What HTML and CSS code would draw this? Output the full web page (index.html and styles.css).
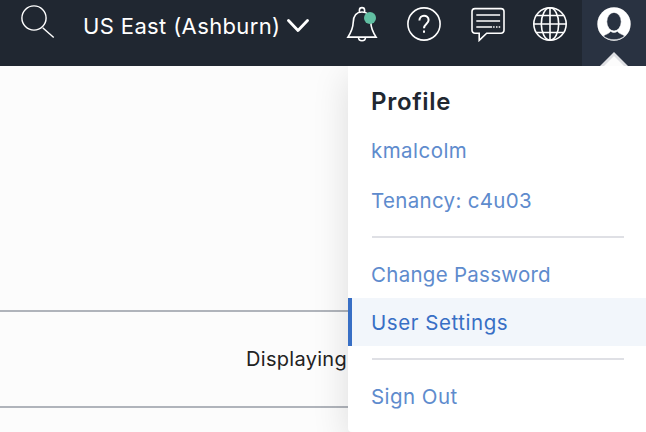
FILE: index.html
```html
<!DOCTYPE html>
<html lang="en">
<head>
<meta charset="utf-8">
<title>Console</title>
<link rel="stylesheet" href="styles.css">
</head>
<body>
<header class="topbar">
  <svg class="icon search" viewBox="0 0 36 36"><circle cx="14" cy="14" r="12.1"/><path d="M22.7 23.7 33.7 33.6"/></svg>
  <div class="region"><span class="region-name">US East (Ashburn)</span>
    <svg class="chevron" viewBox="0 0 22 14"><path d="m1.5 1.5 9.5 10 9.5-10"/></svg>
  </div>
  <svg class="icon bell" viewBox="0 0 36 36"><path d="M15.4 5.8V4.2a2.6 2.6 0 0 1 5.2 0v1.6M3.9 31.1C8.3 24.5 9 21.500 9.200 16.500 9.400 9.800 12.600 6 18 6s8.600 3.800 8.800 10.500c.2 5 .9 8 5.300 14.600zM14.500 31.300c0 4.600 7 4.600 7 0"/><circle class="badge" cx="26" cy="12" r="6"/></svg>
  <svg class="icon help" viewBox="0 0 36 36"><circle cx="18" cy="18" r="16.1"/><path class="question" d="M13.4 14.6c0-6.5 9.2-6.2 9.2-.6 0 4-4.6 4.1-4.6 8.3"/><path class="question" d="M18 24.6v2.2"/></svg>
  <svg class="icon chat" viewBox="0 0 36 36"><path d="M5 2.6h26a3 3 0 0 1 3 3v18.6a3 3 0 0 1-3 3H16.7l-7.5 7.2v-7.2H5a3 3 0 0 1-3-3V5.6a3 3 0 0 1 3-3zM6.3 9h23.8M6.3 15h23.8M6.3 21h15.8M23.1 21h1.5M26 21h1.5M28.7 21h1.5"/></svg>
  <svg class="icon globe" viewBox="0 0 36 36"><circle cx="18" cy="18" r="16.2"/><ellipse cx="18" cy="18" rx="8.7" ry="16.2"/><path d="M18 1.8v32.4M1.8 18h32.4M5 9.5h26M5 26.5h26"/></svg>
  <div class="profile-tab">
    <svg class="icon user" viewBox="0 0 36 36"><circle class="disc" cx="18" cy="18" r="16.7"/><ellipse class="face" cx="18" cy="15.7" rx="7.2" ry="9.3"/><path class="face" d="M7.2 29.900C10 28 13 27.800 14.600 25.200c2 1.600 4.800 1.600 6.800 0 1.600 2.600 4.600 2.800 7.400 4.700-6 5.200-15.600 5.200-21.600 0z"/></svg>
    <svg class="pointer" viewBox="0 0 28 14"><path d="M0 14 14 0l14 14z"/><path class="pointer-fill" d="M4 14 14 4l10 10z"/></svg>
  </div>
</header>
<main class="page">
  <div class="summary">Displaying</div>
</main>
<aside class="menu">
  <h2>Profile</h2>
  <a class="account">kmalcolm</a>
  <a class="tenancy">Tenancy: c4u03</a>
  <hr>
  <a class="password">Change Password</a>
  <a class="selected">User Settings</a>
  <hr>
  <a class="signout">Sign Out</a>
</aside>
</body>
</html>
```

FILE: styles.css
```css
* { box-sizing: border-box; }
body { margin: 0; width: 646px; height: 432px; overflow: hidden; position: relative; background: #fcfcfc; font-family: Inter, "Liberation Sans", sans-serif; }
.topbar { height: 66px; background: #202731; display: flex; align-items: flex-start; color: #fff; }
.icon { width: 36px; height: 36px; margin-top: 6px; flex: none; fill: none; stroke: #fff; stroke-width: 1.6; }
.search { margin-left: 20px; margin-top: 4px; stroke-width: 1.4; }
.region { display: flex; width: 225px; margin-left: 27px; height: 52px; align-items: center; }
.region-name { width: 197px; white-space: nowrap; font-size: 22px; letter-spacing: .37px; }
.chevron { width: 22px; height: 14px; margin-left: 7px; flex: none; fill: none; stroke: #fff; stroke-width: 2.8; stroke-linecap: round; stroke-linejoin: round; }
.bell { margin-left: 36px; }
.bell .badge { fill: #61bfa2; stroke: none; }
.help { margin-left: 26px; }
.help .question { stroke-width: 2; }
.chat { margin-left: 28px; }
.globe { margin-left: 26px; }
.profile-tab { width: 64px; height: 66px; margin-left: 14px; background: #293241; display: flex; flex-direction: column; align-items: center; }
.user .disc { fill: #fff; stroke: none; }
.user .face { fill: #293241; stroke: #fff; stroke-width: .6; }
.pointer { width: 28px; height: 14px; margin-top: 10px; fill: #dfe0e4; }
.pointer-fill { fill: #fcfcfc; }
.page { padding-top: 244px; height: 366px; }
.summary { height: 98px; border: solid #b0b4bb; border-width: 2px 0; padding-left: 246px; line-height: 94px; font-size: 20px; color: #222; letter-spacing: .3px; }
.menu { position: absolute; left: 348px; top: 66px; width: 298px; height: 366px; background: #fff; border-radius: 0 0 0 4px; box-shadow: 0 10px 36px rgba(0, 10, 5, .13); clip-path: inset(0 0 0 -60px); display: flex; flex-direction: column; color: #5e8bcd; }
.menu h2 { margin: 20px 0 0 23px; font-size: 24px; line-height: 32px; font-weight: 600; color: #202731; letter-spacing: .7px; }
.menu a { padding-left: 23px; height: 48px; line-height: 48px; font-size: 20.5px; letter-spacing: .45px; flex: none; white-space: nowrap; }
.menu .account { margin-top: 9px; }
.menu .tenancy { margin-top: 2px; letter-spacing: .32px; }
.menu hr { width: 252px; height: 2px; margin: 11px 0 0 24px; border: 0; background: #dfe0e5; flex: none; }
.menu .password { margin-top: 13px; letter-spacing: .27px; }
.menu .selected { border-left: 4px solid #386fc5; padding-left: 19px; background: #f2f6fb; color: #386fc5; margin-top: -1px; line-height: 50px; letter-spacing: .55px; }
.menu .selected + hr { margin-top: 12px; }
.menu .signout { margin-top: 13px; }
```
